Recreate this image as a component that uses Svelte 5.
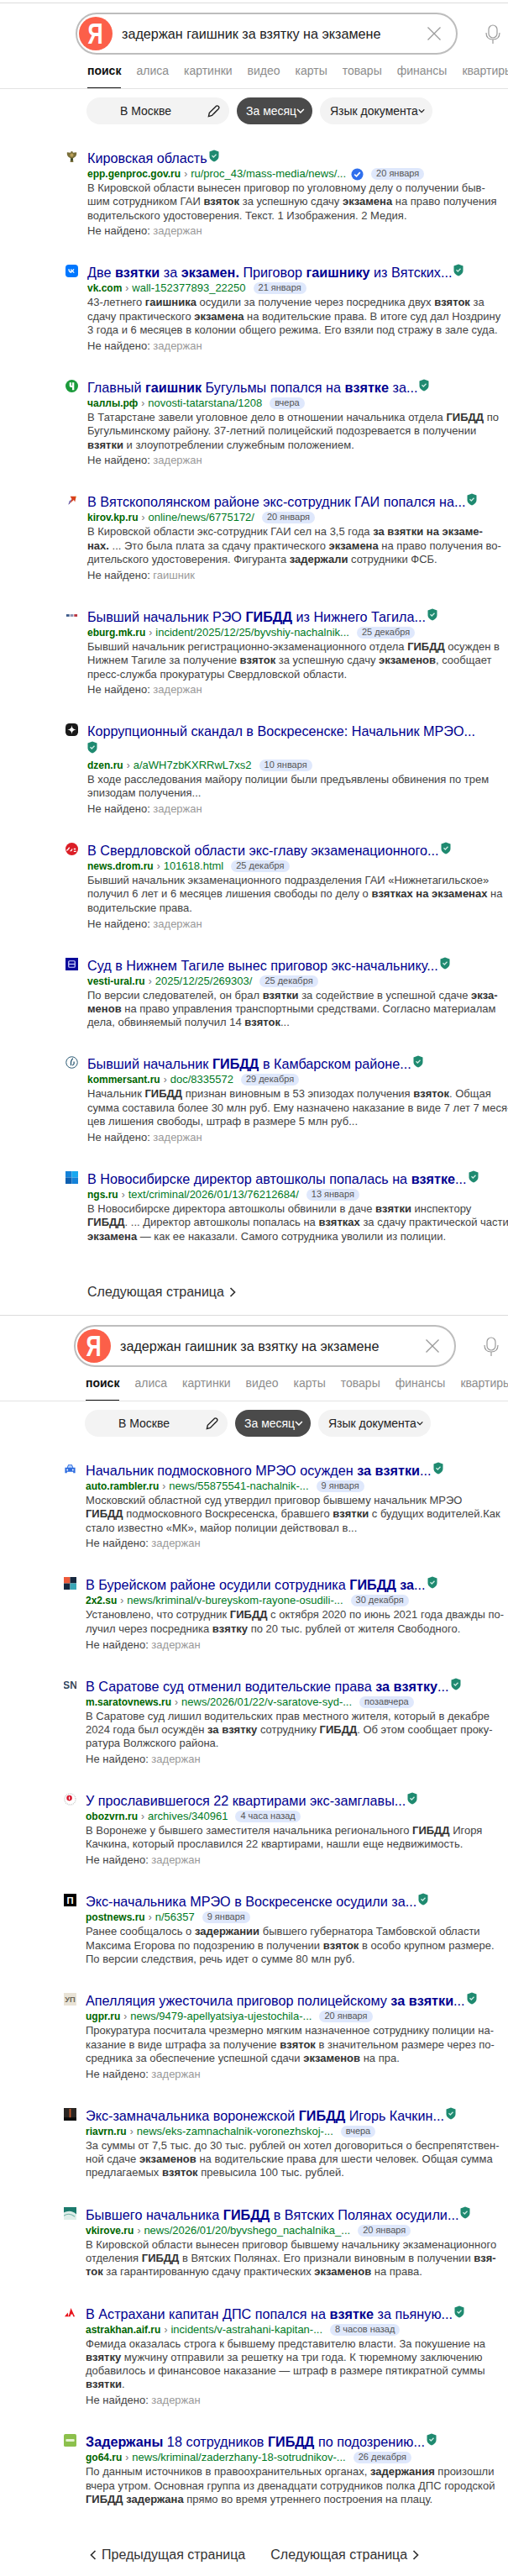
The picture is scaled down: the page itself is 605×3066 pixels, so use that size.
<script>
  const tabs = ["поиск", "алиса", "картинки", "видео", "карты", "товары", "финансы", "квартиры"];

  const first = [
    { icon: "eagle", title: "Кировская область", host: "epp.genproc.gov.ru", path: "ru/proc_43/mass-media/news/...", verified: true, date: "20 января",
      lines: ["В Кировской области вынесен приговор по уголовному делу о получении быв-", "шим сотрудником ГАИ <b>взяток</b> за успешную сдачу <b>экзамена</b> на право получения", "водительского удостоверения. Текст. 1 Изображения. 2 Медия."], missing: "задержан" },
    { icon: "vk", title: "Две <b>взятки</b> за <b>экзамен.</b> Приговор <b>гаишнику</b> из Вятских...", host: "vk.com", path: "wall-152377893_22250", date: "21 января",
      lines: ["43-летнего <b>гаишника</b> осудили за получение через посредника двух <b>взяток</b> за", "сдачу практического <b>экзамена</b> на водительские права. В итоге суд дал Ноздрину", "3 года и 6 месяцев в колонии общего режима. Его взяли под стражу в зале суда."], missing: "задержан" },
    { icon: "chelny", title: "Главный <b>гаишник</b> Бугульмы попался на <b>взятке</b> за...", host: "чаллы.рф", path: "novosti-tatarstana/1208", date: "вчера",
      lines: ["В Татарстане завели уголовное дело в отношении начальника отдела <b>ГИБДД</b> по", "Бугульминскому району. 37-летний полицейский подозревается в получении", "<b>взятки</b> и злоупотреблении служебным положением."], missing: "задержан" },
    { icon: "kp", title: "В Вятскополянском районе экс-сотрудник ГАИ попался на...", host: "kirov.kp.ru", path: "online/news/6775172/", date: "20 января",
      lines: ["В Кировской области экс-сотрудник ГАИ сел на 3,5 года <b>за взятки на экзаме-</b>", "<b>нах.</b> ... Это была плата за сдачу практического <b>экзамена</b> на право получения во-", "дительского удостоверения. Фигуранта <b>задержали</b> сотрудники ФСБ."], missing: "гаишник" },
    { icon: "mk", title: "Бывший начальник РЭО <b>ГИБДД</b> из Нижнего Тагила...", host: "eburg.mk.ru", path: "incident/2025/12/25/byvshiy-nachalnik...", date: "25 декабря",
      lines: ["Бывший начальник регистрационно-экзаменационного отдела <b>ГИБДД</b> осужден в", "Нижнем Тагиле за получение <b>взяток</b> за успешную сдачу <b>экзаменов</b>, сообщает", "пресс-служба прокуратуры Свердловской области."], missing: "задержан" },
    { icon: "dzen", title: "Коррупционный скандал в Воскресенске: Начальник МРЭО...", wrapShield: true, host: "dzen.ru", path: "a/aWH7zbKXRRwL7xs2", date: "10 января",
      lines: ["В ходе расследования майору полиции были предъявлены обвинения по трем", "эпизодам получения..."], missing: "задержан" },
    { icon: "drom", title: "В Свердловской области экс-главу экзаменационного...", host: "news.drom.ru", path: "101618.html", date: "25 декабря",
      lines: ["Бывший начальник экзаменационного подразделения ГАИ «Нижнетагильское»", "получил 6 лет и 6 месяцев лишения свободы по делу о <b>взятках на экзаменах</b> на", "водительские права."], missing: "задержан" },
    { icon: "vesti", title: "Суд в Нижнем Тагиле вынес приговор экс-начальнику...", host: "vesti-ural.ru", path: "2025/12/25/269303/", date: "25 декабря",
      lines: ["По версии следователей, он брал <b>взятки</b> за содействие в успешной сдаче <b>экза-</b>", "<b>менов</b> на право управления транспортными средствами. Согласно материалам", "дела, обвиняемый получил 14 <b>взяток</b>..."] },
    { icon: "kommersant", title: "Бывший начальник <b>ГИБДД</b> в Камбарском районе...", host: "kommersant.ru", path: "doc/8335572", date: "29 декабря",
      lines: ["Начальник <b>ГИБДД</b> признан виновным в 53 эпизодах получения <b>взяток</b>. Общая", "сумма составила более 30 млн руб. Ему назначено наказание в виде 7 лет 7 меся-", "цев лишения свободы, штраф в размере 5 млн руб..."], missing: "задержан" },
    { icon: "ngs", title: "В Новосибирске директор автошколы попалась на <b>взятке</b>...", host: "ngs.ru", path: "text/criminal/2026/01/13/76212684/", date: "13 января",
      lines: ["В Новосибирске директора автошколы обвинили в даче <b>взятки</b> инспектору", "<b>ГИБДД</b>. ... Директор автошколы попалась на <b>взятках</b> за сдачу практической части", "<b>экзамена</b> — как ее наказали. Самого сотрудника уволили из полиции."] }
  ];

  const second = [
    { icon: "rambler", title: "Начальник подмосковного МРЭО осужден <b>за взятки</b>...", host: "auto.rambler.ru", path: "news/55875541-nachalnik-...", date: "9 января",
      lines: ["Московский областной суд утвердил приговор бывшему начальник МРЭО", "<b>ГИБДД</b> подмосковного Воскресенска, бравшего <b>взятки</b> с будущих водителей.Как", "стало известно «МК», майор полиции действовал в..."], missing: "задержан" },
    { icon: "twox", title: "В Бурейском районе осудили сотрудника <b>ГИБДД за</b>...", host: "2x2.su", path: "news/kriminal/v-bureyskom-rayone-osudili-...", date: "30 декабря",
      lines: ["Установлено, что сотрудник <b>ГИБДД</b> с октября 2020 по июнь 2021 года дважды по-", "лучил через посредника <b>взятку</b> по 20 тыс. рублей от жителя Свободного."], missing: "задержан" },
    { icon: "sn", title: "В Саратове суд отменил водительские права <b>за взятку</b>...", host: "m.saratovnews.ru", path: "news/2026/01/22/v-saratove-syd-...", date: "позавчера",
      lines: ["В Саратове суд лишил водительских прав местного жителя, который в декабре", "2024 года был осуждён <b>за взятку</b> сотруднику <b>ГИБДД</b>. Об этом сообщает проку-", "ратура Волжского района."], missing: "задержан" },
    { icon: "oboz", title: "У прославившегося 22 квартирами экс-замглавы...", host: "obozvrn.ru", path: "archives/340961", date: "4 часа назад",
      lines: ["В Воронеже у бывшего заместителя начальника регионального <b>ГИБДД</b> Игоря", "Качкина, который прославился 22 квартирами, нашли еще недвижимость."], missing: "задержан" },
    { icon: "post", title: "Экс-начальника МРЭО в Воскресенске осудили за...", host: "postnews.ru", path: "n/56357", date: "9 января",
      lines: ["Ранее сообщалось о <b>задержании</b> бывшего губернатора Тамбовской области", "Максима Егорова по подозрению в получении <b>взяток</b> в особо крупном размере.", "По версии следствия, речь идет о сумме 80 млн руб."] },
    { icon: "ugpr", title: "Апелляция ужесточила приговор полицейскому <b>за взятки</b>...", host: "ugpr.ru", path: "news/9479-apellyatsiya-ujestochila-...", date: "20 января",
      lines: ["Прокуратура посчитала чрезмерно мягким назначенное сотруднику полиции на-", "казание в виде штрафа за получение <b>взяток</b> в значительном размере через по-", "средника за обеспечение успешной сдачи <b>экзаменов</b> на пра."], missing: "задержан" },
    { icon: "riavrn", title: "Экс-замначальника воронежской <b>ГИБДД</b> Игорь Качкин...", host: "riavrn.ru", path: "news/eks-zamnachalnik-voronezhskoj-...", date: "вчера",
      lines: ["За суммы от 7,5 тыс. до 30 тыс. рублей он хотел договориться о беспрепятствен-", "ной сдаче <b>экзаменов</b> на водительские права для шести человек. Общая сумма", "предлагаемых <b>взяток</b> превысила 100 тыс. рублей."] },
    { icon: "vkirove", title: "Бывшего начальника <b>ГИБДД</b> в Вятских Полянах осудили...", host: "vkirove.ru", path: "news/2026/01/20/byvshego_nachalnika_...", date: "20 января",
      lines: ["В Кировской области вынесен приговор бывшему начальнику экзаменационного", "отделения <b>ГИБДД</b> в Вятских Полянах. Его признали виновным в получении <b>взя-</b>", "<b>ток</b> за гарантированную сдачу практических <b>экзаменов</b> на права."] },
    { icon: "aif", title: "В Астрахани капитан ДПС попался на <b>взятке</b> за пьяную...", host: "astrakhan.aif.ru", path: "incidents/v-astrahani-kapitan-...", date: "8 часов назад",
      lines: ["Фемида оказалась строга к бывшему представителю власти. За покушение на", "<b>взятку</b> мужчину отправили за решетку на три года. К тюремному заключению", "добавилось и финансовое наказание — штраф в размере пятикратной суммы", "<b>взятки</b>."], missing: "задержан" },
    { icon: "go64", title: "<b>Задержаны</b> 18 сотрудников <b>ГИБДД</b> по подозрению...", host: "go64.ru", path: "news/kriminal/zaderzhany-18-sotrudnikov-...", date: "26 декабря",
      lines: ["По данным источников в правоохранительных органах, <b>задержания</b> произошли", "вчера утром. Основная группа из двенадцати сотрудников полка ДПС городской", "<b>ГИБДД задержана</b> прямо во время утреннего построения на плацу."] }
  ];

  const pages = [
    { items: first, prev: false },
    { items: second, prev: true }
  ];
</script>

{#snippet shield()}
  <svg class="shield" viewBox="0 0 12 15" aria-hidden="true">
    <path d="M6 .5 11.5 2.4V8c0 3.2-2.6 5.300-5.5 6.500C3.100 13.300.5 11.200.5 8V2.400z" fill="#1f8a70" />
    <path d="M3.500 7.300 5.300 9l3.200-3.300" fill="none" stroke="#cfeee5" stroke-width="1.300" />
  </svg>
{/snippet}

{#snippet favicon(name)}
  <svg class="fav" viewBox="0 0 16 16" aria-hidden="true">
    {#if name === "eagle"}
      <path d="M8 1c1 0 1.500 1 1.500 2L14 2.500c.5 3-.5 5.500-3 6.500L9.500 10 10 15H6l.5-5L5 9C2.500 8 1.500 5.500 2 2.500L6.500 3C6.500 2 7 1 8 1z" fill="#7a6f3a" />
      <circle cx="8" cy="6" r="2.200" fill="#b9a05a" />
      <path d="M6.500 10h3v3h-3z" fill="#3c4a2a" />
    {:else if name === "vk"}
      <rect width="16" height="16" rx="4" fill="#0077ff" />
      <path d="M3.500 5.500H5c.1 2 1 3 1.700 3.200V5.500h1.300v1.800c.8-.1 1.500-1 1.800-1.800h1.300c-.2 1.200-1 2-1.700 2.500.7.400 1.600 1.100 2 2.500h-1.500c-.3-.9-1-1.600-1.900-1.700v1.700h-.2C5.300 10.500 3.600 8.700 3.500 5.500z" fill="#fff" />
    {:else if name === "chelny"}
      <circle cx="8" cy="8" r="8" fill="#1a9a3a" />
      <path d="M5 3.500v4c0 1.500 1.200 2.300 3.500 2.200V13H11V3.500H8.500v4c-.8 0-1-.3-1-1V3.500z" fill="#fff" />
    {:else if name === "kp"}
      <path d="M6 3h7.500L12 10 10.500 7.500 5.500 12 8 6.500z" fill="#d8401c" />
      <path d="M8 6.500 5.500 12 3.500 13.500 5 9z" fill="#6a5ca8" />
      <path d="M12 3h1.500V5z" fill="#e8b23a" />
    {:else if name === "mk"}
      <rect x="1" y="6.500" width="4" height="3" fill="#3d5a8a" />
      <rect x="6" y="6.500" width="4" height="3" fill="#8a8fb0" />
      <rect x="11" y="6.500" width="4" height="3" fill="#b8333f" />
    {:else if name === "dzen"}
      <rect width="16" height="16" rx="5" fill="#1a1a1a" />
      <path d="M8 2.500C8.300 6 10 7.700 13.500 8 10 8.300 8.300 10 8 13.500 7.700 10 6 8.300 2.500 8 6 7.700 7.700 6 8 2.500z" fill="#fff" />
    {:else if name === "drom"}
      <circle cx="8" cy="8" r="8" fill="#db1e26" />
      <path d="M1.500 10c1.500-1 2.500-2 3.500-4M6 10.500c1.500 0 2-1 2.500-2.500M10.500 8h2.500M10.500 11h3" fill="none" stroke="#fff" stroke-width="1.400" />
    {:else if name === "vesti"}
      <rect width="16" height="16" fill="#0a0a9a" />
      <rect x="4" y="4" width="8" height="8" rx="1" fill="none" stroke="#cfd4ff" stroke-width="1.300" />
      <path d="M4 8h8" stroke="#cfd4ff" stroke-width="1.300" />
    {:else if name === "kommersant"}
      <circle cx="8" cy="8" r="7.200" fill="none" stroke="#1d4f6b" stroke-width="1" />
      <path d="M9.500 3C7.500 4.500 6.500 8 7 12M10.500 7c1 2 0 4.500-2 4.500" fill="none" stroke="#1d4f6b" stroke-width="1.300" />
    {:else if name === "ngs"}
      <rect width="8" height="8" fill="#1482d8" />
      <rect x="8" width="8" height="8" fill="#18a8f0" />
      <rect y="8" width="8" height="8" fill="#0d5fb0" />
      <rect x="8" y="8" width="8" height="8" fill="#1482d8" />
    {:else if name === "rambler"}
      <path d="M4 6 5.500 2.500h5L12 6h2.500v7H12v-1.500H4V13H1.500V6z" fill="#2f6de0" />
      <path d="M6.200 3.500h3.600L11 6H5z" fill="#bcd8ff" />
      <circle cx="4.500" cy="9" r="1" fill="#fff" />
      <circle cx="11.500" cy="9" r="1" fill="#fff" />
    {:else if name === "twox"}
      <rect width="8" height="8" fill="#ee5a3a" />
      <rect x="8" width="8" height="8" fill="#16283f" />
      <rect y="8" width="8" height="8" fill="#16283f" />
      <rect x="8" y="8" width="8" height="8" fill="#3aa7b8" />
    {:else if name === "sn"}
      <text class="favtext" x="8" y="13" font-size="13" fill="#34465c">SN</text>
    {:else if name === "oboz"}
      <circle cx="8" cy="8" r="7" fill="none" stroke="#ccc" stroke-width="1.600" stroke-dasharray="1 1" />
      <circle cx="7" cy="6.500" r="3.500" fill="#d8142c" />
      <rect x="6.300" y="4.500" width="1.400" height="4" rx=".7" fill="#fff" />
    {:else if name === "post"}
      <rect width="16" height="16" fill="#000" />
      <text class="favtext" x="8" y="12.500" font-size="12" fill="#fff">П</text>
    {:else if name === "ugpr"}
      <rect width="16" height="16" fill="#e9e3d6" />
      <text class="favtext" x="8" y="12" font-size="10" fill="#6b6557">УП</text>
    {:else if name === "riavrn"}
      <rect width="16" height="16" fill="#2a2623" />
      <rect x="7" y="1" width="2" height="13" fill="#c2572a" />
      <rect y="12" width="16" height="4" fill="#0a0a0a" />
    {:else if name === "vkirove"}
      <rect width="16" height="16" fill="#dfeeea" />
      <path d="M0 0h16v9C11 4 5 4 0 7z" fill="#1b7a6c" />
      <path d="M0 11c4-3 9-3 14 1" fill="none" stroke="#7ab5a9" stroke-width="1.200" />
    {:else if name === "aif"}
      <path d="M1 13 5 8l1 5zM9 2l-3 11h2l1-3h2l1 3h2z" fill="#e8141c" />
    {:else if name === "go64"}
      <rect width="16" height="16" rx="2" fill="#8cc04c" />
      <rect x="2.500" y="6.500" width="11" height="3" rx="1" fill="#e6f3d3" />
    {/if}
  </svg>
{/snippet}

{#each pages as page, p}
  <section class="page" class:second={p === 1}>
    <div class="searchbar">
      <div class="searchbox">
        <span class="logo"><span class="ya">Я</span></span>
        <span class="query">задержан гаишник за взятку на экзамене</span>
        <svg class="clear" viewBox="0 0 16 16" aria-hidden="true">
          <path d="M.5.5 15.5 15.500M15.500.5.5 15.500" stroke="#9a9a9a" stroke-width="1.300" />
        </svg>
      </div>
      <svg class="mic" viewBox="0 0 18 23" aria-hidden="true">
        <rect x="4" y="1" width="10" height="15" rx="5" fill="none" stroke="#9a9a9a" stroke-width="1.200" />
        <path d="M1 10c0 5.500 3 8 8 8s8-2.500 8-8M9 18v5" fill="none" stroke="#9a9a9a" stroke-width="1.200" />
      </svg>
    </div>

    <nav class="tabs">
      {#each tabs as tab, i}
        <span class="tab" class:active={i === 0}>{tab}</span>
      {/each}
    </nav>

    <div class="chips">
      <div class="chip region">
        <span>В Москве</span>
        <svg class="pencil" viewBox="0 0 16 16" aria-hidden="true">
          <path d="M1.500 14.500 2.500 10 11 1.500c1-.8 2.200-.6 3 .2.900.9 1 2.100.2 3L5.800 13.300z" fill="none" stroke="#222" stroke-width="1.500" />
        </svg>
      </div>
      <div class="chip dark">
        <span>За месяц</span>
        <svg class="caret" viewBox="0 0 10 6" aria-hidden="true"><path d="M1 1 5 5l4-4" fill="none" stroke="#fff" stroke-width="1.600" /></svg>
      </div>
      <div class="chip lang">
        <span>Язык документа</span>
        <svg class="caret" viewBox="0 0 10 6" aria-hidden="true"><path d="M1 1 5 5l4-4" fill="none" stroke="#222" stroke-width="1.600" /></svg>
      </div>
    </div>

    <div class="results">
      {#each page.items as r}
        <article class="result">
          <span class="icon">{@render favicon(r.icon)}</span>
          <h2 class="title" class:wrapped={r.wrapShield}>
            <span>{@html r.title}</span>{@render shield()}
          </h2>
          <div class="url">
            <span class="host">{r.host}</span><span class="sep">›</span><span class="path">{r.path}</span>
            {#if r.verified}
              <svg class="verified" viewBox="0 0 16 16" aria-hidden="true">
                <circle cx="8" cy="8" r="7.500" fill="#2f6fed" />
                <path d="M4.500 8.200 7 10.500l4.500-5" fill="none" stroke="#fff" stroke-width="1.800" />
              </svg>
            {/if}
            <span class="date">{r.date}</span>
          </div>
          <div class="snippet">
            {#each r.lines as line}
              <div>{@html line}</div>
            {/each}
          </div>
          {#if r.missing}
            <div class="missing">Не найдено: <span>{r.missing}</span></div>
          {/if}
        </article>
      {/each}
    </div>

    <div class="pager">
      {#if page.prev}
        <span class="pagelink">
          <svg class="chev" viewBox="0 0 8 12" aria-hidden="true"><path d="M6.500 1 1.500 6l5 5" fill="none" stroke="#333" stroke-width="1.700" /></svg>
          Предыдущая страница
        </span>
      {/if}
      <span class="pagelink">
        Следующая страница
        <svg class="chev" viewBox="0 0 8 12" aria-hidden="true"><path d="M1.500 1l5 5-5 5" fill="none" stroke="#333" stroke-width="1.700" /></svg>
      </span>
    </div>
  </section>
{/each}

<style>
  :global(body) {
    margin: 0;
    background: #fff;
    font-family: "Liberation Sans", Arial, sans-serif;
    color: #222;
  }

  .page {
    height: 1562px;
    box-sizing: border-box;
    margin-top: 3px;
    padding-top: 11px;
    border-top: 1px solid #dcdcdc;
    overflow: hidden;
  }

  .page.second {
    height: 1501px;
    margin-top: 0;
    margin-left: -2px;
  }

  .searchbar {
    display: flex;
    align-items: center;
    padding-left: 90px;
  }

  .searchbox {
    box-sizing: border-box;
    width: 455px;
    height: 50px;
    border: 2px solid #bdbdbd;
    border-radius: 25px;
    display: flex;
    align-items: center;
    padding: 0 18px 0 2px;
  }

  .logo {
    width: 40px;
    height: 40px;
    border-radius: 50%;
    background: #fc5f49;
    color: #fff;
    text-align: center;
    flex: none;
  }

  .ya {
    display: inline-block;
    font-size: 35px;
    line-height: 40px;
    font-weight: 700;
    transform: scaleX(0.72);
  }

  .query {
    margin-left: 11px;
    font-size: 16.2px;
    color: #222;
    flex: 1;
    white-space: nowrap;
  }

  .clear {
    width: 16px;
    height: 16px;
  }

  .mic {
    width: 18px;
    height: 23px;
    margin-left: 33px;
  }

  .tabs {
    display: flex;
    gap: 18px;
    padding-left: 104px;
    margin-top: 7px;
    height: 33px;
    border-bottom: 1px solid #e3e3e3;
    white-space: nowrap;
  }

  .tab {
    font-size: 14px;
    line-height: 24px;
    color: #8d8d8d;
    height: 32px;
  }

  .tab.active {
    color: #111;
    font-weight: 700;
    border-bottom: 1px solid #111;
  }

  .chips {
    display: flex;
    gap: 9px;
    padding-left: 103px;
    margin-top: 10px;
  }

  .chip {
    box-sizing: border-box;
    height: 32px;
    border-radius: 16px;
    background: #f3f3f3;
    display: flex;
    align-items: center;
    font-size: 14px;
    color: #222;
    white-space: nowrap;
  }

  .chip.region {
    width: 170px;
    justify-content: space-between;
    padding: 0 11px 0 40px;
  }

  .chip.dark {
    width: 90px;
    justify-content: space-between;
    background: #4a4a4a;
    color: #fff;
    padding: 0 9px 0 11px;
  }

  .chip.lang {
    width: 134px;
    justify-content: space-between;
    padding: 0 9px 0 12px;
  }

  .pencil {
    width: 15px;
    height: 15px;
  }

  .caret {
    width: 10px;
    height: 6px;
  }

  .results {
    margin-top: 30px;
  }

  .result {
    position: relative;
    padding-left: 104px;
    padding-bottom: 31px;
  }

  .icon {
    position: absolute;
    left: 78px;
    top: 1px;
    width: 15px;
    height: 15px;
  }

  .fav {
    display: block;
    width: 15px;
    height: 15px;
  }

  .favtext {
    font-family: "Liberation Sans", sans-serif;
    font-weight: 700;
    text-anchor: middle;
  }

  .title {
    margin: 0;
    font-size: 16.2px;
    font-weight: 400;
    line-height: 20px;
    color: #00008f;
    white-space: nowrap;
    display: flex;
    align-items: flex-start;
    gap: 2px;
  }

  .title :global(b) {
    font-weight: 700;
  }

  .title.wrapped {
    display: block;
  }

  .title.wrapped .shield {
    display: block;
    margin: 1.5px 0 5px;
  }

  .shield {
    width: 12px;
    height: 15px;
    flex: none;
  }

  .url {
    display: flex;
    align-items: center;
    font-size: 13px;
    line-height: 18px;
    white-space: nowrap;
    height: 18px;
  }

  .host {
    color: #006600;
    font-size: 12px;
    font-weight: 700;
  }

  .sep {
    color: #777;
    margin: 0 4px;
    font-size: 12px;
  }

  .path {
    color: #007a1f;
  }

  .verified {
    width: 15px;
    height: 15px;
    margin-left: 6px;
  }

  .date {
    margin-left: 9px;
    height: 14px;
    line-height: 13px;
    padding: 0 6px;
    border-radius: 7px;
    background: #dfe8fc;
    color: #555;
    font-size: 11px;
  }

  .snippet {
    font-size: 13px;
    line-height: 16.3px;
    color: #444;
    white-space: nowrap;
  }

  .snippet :global(b) {
    color: #333;
    font-weight: 700;
  }

  .missing {
    margin-top: 2.6px;
    font-size: 13px;
    line-height: 16px;
    color: #444;
  }

  .missing span {
    color: #999;
  }

  .pager {
    display: flex;
    gap: 30px;
    margin-top: 17px;
    padding-left: 109px;
    font-size: 16px;
    line-height: 20px;
    color: #333;
  }

  .page:not(.second) .pager {
    padding-left: 104px;
  }

  .pagelink {
    display: inline-flex;
    align-items: center;
    gap: 6px;
  }

  .chev {
    width: 8px;
    height: 12px;
  }
</style>
